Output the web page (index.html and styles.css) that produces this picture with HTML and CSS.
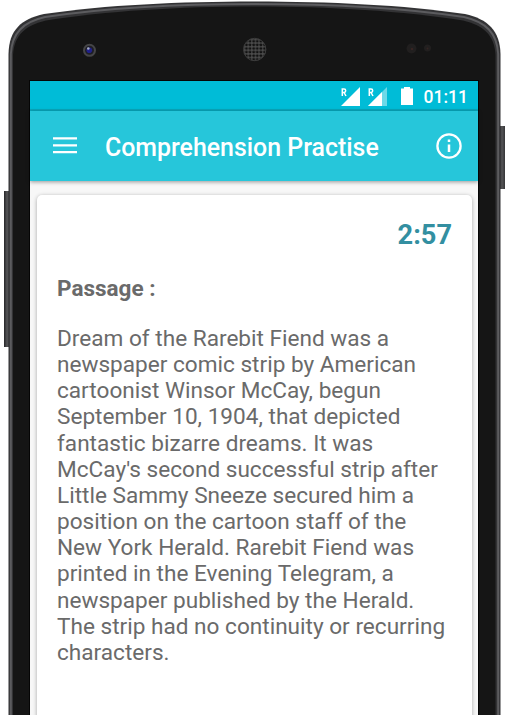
FILE: index.html
```html
<!DOCTYPE html>
<html lang="en">
<head>
<meta charset="utf-8">
<title>Comprehension Practise</title>
<link rel="stylesheet" href="styles.css">
</head>
<body>
<div class="phone">
  <svg class="frame" viewBox="0 0 509 715" aria-hidden="true">
    <defs>
      <linearGradient id="key" x1="0" x2="1"><stop offset="0" stop-color="#252527"/><stop offset=".5" stop-color="#555557"/><stop offset="1" stop-color="#353537"/></linearGradient>
      <pattern id="grille" width="3.600" height="3.600" patternUnits="userSpaceOnUse"><rect width="4" height="4" fill="#4c4c4c"/><rect x=".4" y=".4" width="2.500" height="2.500" rx=".8" fill="#111"/></pattern>
    </defs>
    <rect x="4" y="191" width="6" height="156" fill="url(#key)"/>
    <rect x="499" y="126" width="6" height="63" fill="url(#key)"/>
    <path d="M8.500 720V54C9 30 21 19 44 14C105 5 180 1.500 254.500 1.500S404 5 465 14C488 19 500 31 500.500 54V720Z" fill="#333335"/>
    <path d="M10.800 720V54C12 33 23 22 45 17C105 8 180 4 254.500 4S404 8 464 17C486 22 497 33 498.200 54V720" fill="none" stroke="#5c5c5f" stroke-width="2"/>
    <path d="M13 720V55C14 35 26 25 46 20.500C105 11 180 6.500 254.500 6.500S404 11 463 20.500C483 25 494.500 35 495.500 55V720Z" fill="#151515"/>
    <circle cx="89.500" cy="50.300" r="6.500" fill="#454547"/><circle cx="89.500" cy="50.300" r="4.500" fill="#1e1e25"/><circle cx="89.300" cy="50.300" r="2.800" fill="#20208a"/><circle cx="88.300" cy="48.500" r="1.300" fill="#a5adc5"/>
    <circle cx="254.700" cy="49.500" r="11.200" fill="url(#grille)" stroke="#3c3c3c"/>
    <circle cx="411.500" cy="48.500" r="5" fill="#211f1f"/><circle cx="412" cy="49" r="1.300" fill="#362422"/><circle cx="427.500" cy="48" r="3.500" fill="#211f1f"/><circle cx="427.500" cy="48.500" r="1" fill="#332422"/>
  </svg>
  <main class="screen">
    <div class="status">
      <svg class="signals" viewBox="0 0 75 22" aria-hidden="true">
        <path d="M0 20L19 1V20Z" fill="#fff"/>
        <path d="M27 20L46 1V20Z" fill="#6dd9e8"/><path d="M27 20L41 6V20Z" fill="#fff"/>
        <path d="M60 2.500H63V1H69V2.500H72V19H60Z" fill="#fff"/>
        <g fill="none" stroke="#fff" stroke-width="1.500"><path d="M1.300 10V3H3Q4.700 3 4.700 4.700T3 6.500H1.300M3 6.500L5 10M28.300 10V3H30Q31.700 3 31.700 4.700T30 6.500H28.300M30 6.500L32 10"/></g>
      </svg>
      <span class="clock">01:11</span>
    </div>
    <header class="bar">
      <svg class="menu" viewBox="0 0 24 17" aria-hidden="true"><path d="M0 1.300H24M0 8.300H24M0 15.100H24" stroke="#fff" stroke-width="2.300"/></svg>
      <h1>Comprehension Practise</h1>
      <svg class="info" viewBox="0 0 26 26" aria-hidden="true"><circle cx="13" cy="13" r="11.600" fill="none" stroke="#fff" stroke-width="2.300"/><path d="M13 11.500V19M13 6.600V9.100" stroke="#fff" stroke-width="2.500"/></svg>
    </header>
    <article class="card">
      <div class="timer">2:57</div>
      <h2>Passage :</h2>
      <p>Dream of the Rarebit Fiend was a<br>newspaper comic strip by American<br>cartoonist Winsor McCay, begun<br>September 10, 1904, that depicted<br>fantastic bizarre dreams. It was<br>McCay's second successful strip after<br>Little Sammy Sneeze secured him a<br>position on the cartoon staff of the<br>New York Herald. Rarebit Fiend was<br>printed in the Evening Telegram, a<br>newspaper published by the Herald.<br>The strip had no continuity or recurring<br>characters.</p>
    </article>
  </main>
</div>
</body>
</html>
```
FILE: styles.css
```css
* { box-sizing: border-box; }
body { margin: 0; background: #fff; font-family: Roboto, sans-serif; overflow: hidden; }
.phone { position: relative; width: 509px; height: 715px; padding: 81px 31px 0 30px; overflow: hidden; }
.frame { position: absolute; inset: 0; width: 509px; height: 715px; }
.screen { position: relative; height: 634px; display: flex; flex-direction: column; background: #f7f7f7; box-shadow: 0 0 0 1px #050505; }
.status { height: 30px; flex: none; display: flex; justify-content: flex-end; align-items: center; background: #00bcd7; border-bottom: 2px solid #08a8bd; padding-right: 10px; color: #fff; }
.signals { width: 75px; height: 22px; margin: 3px 8px 0 0; }
.clock { font-size: 17.5px; font-weight: 500; line-height: 28px; padding-top: 3px; }
.bar { height: 70px; flex: none; display: flex; align-items: center; padding: 0 16px 0 23px; background: #26c6da; box-shadow: 0 1px 4px #0006; color: #fff; }
.menu { width: 24px; height: 17px; margin: 0 28px 2px 0; }
h1 { margin: 3px 0 0; font-size: 24.9px; font-weight: 500; line-height: 30px; white-space: nowrap; }
.info { width: 26px; height: 26px; margin-left: auto; }
.card { flex: 1; margin: 14px 6px -10px 7px; padding: 0 20px; background: #fff; border-radius: 5px; box-shadow: 0 1px 4px #0005; color: #6a6a6a; }
.timer { height: 80px; padding-top: 24px; text-align: right; font-size: 27.2px; line-height: 33px; font-weight: 700; color: #338fa1; }
h2 { margin: 0; font-size: 22.5px; line-height: 27px; font-weight: 700; }
p { margin: 24px 0 0; font-size: 22.6px; line-height: 26.15px; white-space: nowrap; }
```
